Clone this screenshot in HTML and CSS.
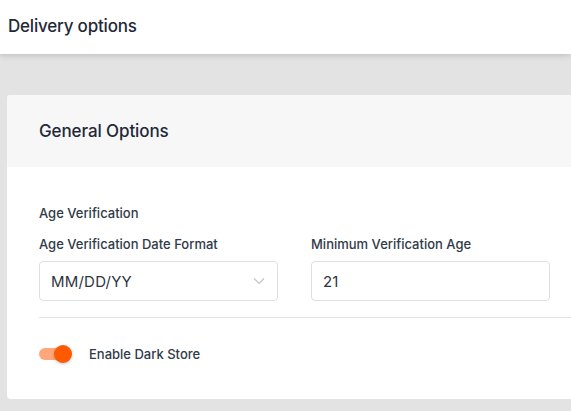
FILE: index.html
```html
<!DOCTYPE html>
<html>
<head>
<meta charset="utf-8">
<link rel="stylesheet" href="styles.css">
</head>
<body>
<header class="topbar"><h1 class="page-title">Delivery options</h1></header>
<main class="content">
  <section class="card">
    <div class="card-head"><h2 class="card-title">General Options</h2></div>
    <div class="card-body">
      <div class="section-label">Age Verification</div>
      <div class="fields">
        <div class="field">
          <label class="field-label">Age Verification Date Format</label>
          <div class="control select">
            <span class="value">MM/DD/YY</span>
            <svg class="chev" width="12" height="8" viewBox="0 0 12 8"><path d="M1 1.5l5 5 5-5" fill="none" stroke="#c0c4cc" stroke-width="1.2"/></svg>
          </div>
        </div>
        <div class="field">
          <label class="field-label">Minimum Verification Age</label>
          <div class="control"><span class="value">21</span></div>
        </div>
      </div>
      <hr class="divider">
      <div class="toggle-row">
        <span class="switch"><span class="knob"></span></span>
        <span class="toggle-label">Enable Dark Store</span>
      </div>
    </div>
  </section>
</main>
</body>
</html>
```
FILE: styles.css
```css
* { box-sizing: border-box; }
html, body { margin: 0; padding: 0; }
body {
  width: 571px;
  height: 411px;
  overflow: hidden;
  background: #e3e3e3;
  font-family: Inter, "Noto Sans", sans-serif;
  color: #2f3542;
}
.topbar {
  height: 54px;
  background: #fff;
  display: flex;
  align-items: center;
  padding: 0 8px 2px;
  box-shadow: 0 2px 6px rgba(0,0,0,0.12), -2px 0 6px rgba(0,0,0,0.05);
  position: relative;
  z-index: 1;
}
.page-title {
  margin: 0;
  font-size: 17px;
  font-weight: 500;
  color: #1f2937;
  letter-spacing: -0.2px;
}
.content {
  padding: 41px 0 0 7px;
  overflow: hidden;
}
.card {
  background: #fff;
  border-radius: 4px 0 0 4px;
  margin-right: -40px;
  overflow: hidden;
}
.card-head {
  background: #f7f7f7;
  height: 72px;
  padding: 0 32px;
  display: flex;
  align-items: center;
}
.card-title {
  margin: 0;
  font-size: 17px;
  font-weight: 500;
  color: #1f2937;
  letter-spacing: -0.1px;
}
.card-body {
  padding: 38px 0 36px 32px;
}
.section-label {
  font-size: 13px;
  font-weight: 500;
  color: #303a48;
  line-height: 16px;
}
.fields {
  display: flex;
  gap: 33px;
  margin-top: 15px;
}
.field { width: 239px; display: flex; flex-direction: column; }
.field-label {
  font-size: 13px;
  font-weight: 500;
  color: #303a48;
  line-height: 16px;
  margin-bottom: 9px;
}
.control {
  height: 40px;
  border: 1px solid #dcdfe6;
  border-radius: 4px;
  display: flex;
  align-items: center;
  justify-content: space-between;
  padding: 0 12px 0 11px;
}
.value {
  font-size: 15px;
  letter-spacing: 0.2px;
  color: #2f3542;
}
.divider {
  margin: 16px 0 0;
  border: 0;
  border-top: 1px solid #e4e4e4;
}
.toggle-row {
  display: flex;
  align-items: center;
  margin-top: 27px;
  height: 18px;
}
.switch {
  position: relative;
  width: 28px;
  height: 12px;
  border-radius: 6px;
  background: #ffa77a;
}
.knob {
  position: absolute;
  right: -5px;
  top: -3px;
  width: 18px;
  height: 18px;
  border-radius: 50%;
  background: #ff5a00;
  box-shadow: 0 1px 3px rgba(0,0,0,0.25);
}
.toggle-label {
  margin-left: 22px;
  font-size: 13px;
  font-weight: 500;
  color: #303a48;
}
```
